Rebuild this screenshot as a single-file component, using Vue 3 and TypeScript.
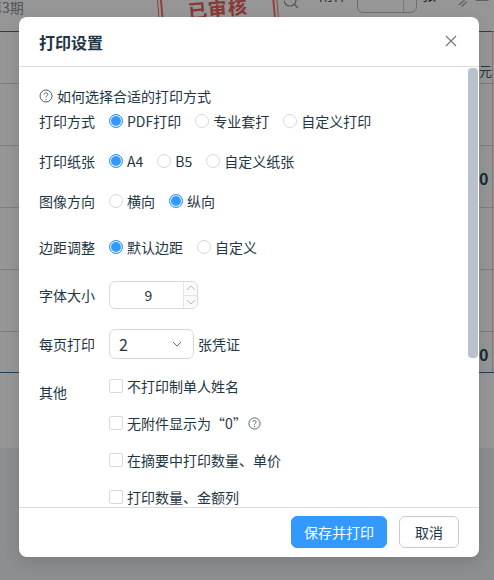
<script setup lang="ts">
const radioRows = [
  {
    title: '打印方式',
    cls: 'r-method',
    items: [
      { label: 'PDF打印', on: true },
      { label: '专业套打', on: false },
      { label: '自定义打印', on: false },
    ],
  },
  {
    title: '打印纸张',
    cls: 'r-paper',
    items: [
      { label: 'A4', on: true },
      { label: 'B5', on: false },
      { label: '自定义纸张', on: false },
    ],
  },
  {
    title: '图像方向',
    cls: 'r-dir',
    items: [
      { label: '横向', on: false },
      { label: '纵向', on: true },
    ],
  },
  {
    title: '边距调整',
    cls: 'r-margin',
    items: [
      { label: '默认边距', on: true },
      { label: '自定义', on: false },
    ],
  },
]
</script>

<template>
  <div class="page">
    <div class="backdrop-content">
      <div class="bg-lower"></div>
      <span class="bg-period">第3期</span>
      <div class="bg-stamp"><span>已审核</span></div>
      <svg class="bg-search" width="16" height="16" viewBox="0 0 16 16"><circle cx="6" cy="4" r="6" fill="none" stroke="#8a9199" stroke-width="1.2" /><path d="M10.5 8.5 14 12" stroke="#8a9199" stroke-width="1.2" /></svg>
      <span class="bg-text attach">附件</span>
      <div class="bg-spin"><i></i></div>
      <span class="bg-text zhang">张</span>
      <svg class="bg-clip" width="11" height="8" viewBox="0 0 11 8"><path d="M2 6 8 .5M4.5 7.5 10 2.5" fill="none" stroke="#a0a6ac" stroke-width="1.2" /></svg>
      <span class="bg-text shang">上</span>
      <span class="bg-line l1"></span>
      <span class="bg-line l2"></span>
      <span class="bg-line l3"></span>
      <span class="bg-line l4"></span>
      <span class="bg-line l5"></span>
      <span class="bg-line l6"></span>
      <span class="bg-line l7"></span>
      <span class="bg-vline"></span>
      <span class="bg-yuan">元</span>
      <span class="bg-zero z1">0</span>
      <span class="bg-zero z2">0</span>
    </div>
    <div class="mask"></div>

    <section class="dialog">
      <header class="dialog-head">
        <h2>打印设置</h2>
        <svg class="close" width="14" height="14" viewBox="0 0 14 14"><path d="M2 2 12 12M12 2 2 12" stroke="#6b7680" stroke-width="1.1" fill="none" /></svg>
      </header>

      <div class="dialog-body">
        <div class="scroll-thumb"></div>
        <div class="help-row">
          <svg class="help" width="14" height="14" viewBox="0 0 14 14"><circle cx="7" cy="7" r="6" fill="none" stroke="#4a5a66" stroke-width="1" /><path d="M5.2 5.4C5.3 4.3 6 3.8 7 3.8c1.1 0 1.8.7 1.8 1.6 0 1.3-1.8 1.4-1.8 2.8" fill="none" stroke="#4a5a66" stroke-width="1" /><circle cx="7" cy="10.1" r=".7" fill="#4a5a66" /></svg>
          <span>如何选择合适的打印方式</span>
        </div>

        <div v-for="row in radioRows" :key="row.title" class="form-row" :class="row.cls">
          <span class="label">{{ row.title }}</span>
          <div class="radios">
            <label v-for="item in row.items" :key="item.label" class="radio">
              <i class="dot" :class="{ on: item.on }"></i>
              <span>{{ item.label }}</span>
            </label>
          </div>
        </div>

        <div class="form-row r-font">
          <span class="label">字体大小</span>
          <div class="spinner">
            <span class="spin-value">9</span>
            <div class="spin-btns">
              <span><svg width="10" height="6" viewBox="0 0 10 6"><path d="M1 5 5 1l4 4" fill="none" stroke="#b5bcc4" /></svg></span>
              <span><svg width="10" height="6" viewBox="0 0 10 6"><path d="M1 1l4 4 4-4" fill="none" stroke="#b5bcc4" /></svg></span>
            </div>
          </div>
        </div>

        <div class="form-row r-per">
          <span class="label">每页打印</span>
          <div class="select">
            <span>2</span>
            <svg width="10" height="6" viewBox="0 0 10 6"><path d="M1 1l4 4 4-4" fill="none" stroke="#5d6b76" /></svg>
          </div>
          <span class="unit">张凭证</span>
        </div>

        <div class="others">
          <span class="label others-label">其他</span>
          <div class="checks">
            <label class="check"><i class="box"></i><span>不打印制单人姓名</span></label>
            <label class="check">
              <i class="box"></i><span>无附件显示为“0”</span>
              <svg class="help small" width="13" height="13" viewBox="0 0 14 14"><circle cx="7" cy="7" r="6" fill="none" stroke="#4a5a66" stroke-width="1" /><path d="M5.2 5.4C5.3 4.3 6 3.8 7 3.8c1.1 0 1.8.7 1.8 1.6 0 1.3-1.8 1.4-1.8 2.8" fill="none" stroke="#4a5a66" stroke-width="1" /><circle cx="7" cy="10.1" r=".7" fill="#4a5a66" /></svg>
            </label>
            <label class="check"><i class="box"></i><span>在摘要中打印数量、单价</span></label>
            <label class="check"><i class="box"></i><span>打印数量、金额列</span></label>
          </div>
        </div>
      </div>

      <footer class="dialog-foot">
        <button class="btn primary" type="button">保存并打印</button>
        <button class="btn" type="button">取消</button>
      </footer>
    </section>
  </div>
</template>

<style>
html, body { margin: 0; padding: 0; }
</style>

<style scoped>
.page {
  position: relative;
  width: 494px;
  height: 580px;
  overflow: hidden;
  background: #fff;
  font-family: "Noto Sans CJK SC", "Noto Sans", sans-serif;
  font-size: 14px;
  color: #1f3644;
}
.backdrop-content { position: absolute; inset: 0; }
.bg-lower { position: absolute; left: 0; right: 0; top: 448px; bottom: 0; background: #eff2f5; }
.mask { position: absolute; inset: 0; background: rgba(0, 0, 0, 0.41); }
.bg-period { position: absolute; left: -12px; top: -3px; font-size: 14px; color: #8a9199; white-space: nowrap; }
.bg-stamp {
  position: absolute; left: 160px; top: -34px; width: 114px; height: 64px; box-sizing: border-box;
  padding-bottom: 8px;
  border: 2px solid #f07068; outline: 1px solid #f07068; outline-offset: 2px;
  transform: rotate(-5deg); color: #e8605a; font-weight: 700; font-size: 19px;
  display: flex; justify-content: center; align-items: flex-end;
  letter-spacing: 1px; line-height: 24px;
}
.bg-search { position: absolute; left: 284px; top: -4px; }
.bg-text { position: absolute; top: -16px; font-size: 14px; color: #2a4256; white-space: nowrap; }
.attach { left: 319px; }
.zhang { left: 422px; }
.shang { left: 475px; color: #a0a6ac; }
.bg-clip { position: absolute; left: 457px; top: -1px; }
.bg-spin {
  position: absolute; left: 357px; top: -12px; width: 60px; height: 25px; box-sizing: border-box;
  border: 1px solid #bbb; border-radius: 6px;
}
.bg-spin i { position: absolute; right: 12px; top: 0; bottom: 0; width: 1px; background: #ccc; }
.bg-line { position: absolute; left: 0; right: 0; height: 1px; background: #d4d4d4; }
.l1 { top: 31px; background: #4a6882; }
.l2 { top: 83px; }
.l3 { top: 145px; }
.l4 { top: 207px; }
.l5 { top: 269px; }
.l6 { top: 331px; }
.l7 { top: 372px; background: #4a6882; }
.bg-vline { position: absolute; left: 492px; top: 31px; bottom: 208px; width: 1px; background: #e0cdcd; }
.bg-yuan { position: absolute; left: 479px; top: 61px; font-size: 13px; color: #4a5a66; }
.bg-zero { position: absolute; left: 479px; font-size: 16px; font-weight: 700; color: #2c4a60; }
.z1 { top: 166px; }
.z2 { top: 342px; }

.dialog {
  position: absolute;
  left: 19px;
  top: 17px;
  width: 460px;
  height: 540px;
  display: flex;
  flex-direction: column;
  background: #fff;
  border-radius: 8px;
  box-shadow: 0 6px 16px rgba(0, 0, 0, 0.12);
  overflow: hidden;
}
.dialog-head {
  flex: none;
  height: 50px;
  box-sizing: border-box;
  padding: 0 21px 0 20px;
  display: flex;
  align-items: center;
  justify-content: space-between;
  border-bottom: 1px solid #dcdcdc;
}
.dialog-head h2 { margin: 0; font-size: 16px; font-weight: 700; color: #1f3644; }
.close { display: block; margin-top: -2px; }
.dialog-body {
  position: relative;
  flex: 1;
  min-height: 0;
  overflow: hidden;
  padding: 19px 0 0 20px;
}
.scroll-thumb {
  position: absolute; right: 1px; top: 1px; width: 10px; height: 290px;
  border-radius: 4px; background: #b9c1cd;
}
.help-row { display: flex; align-items: center; gap: 4px; height: 20px; line-height: 20px; }
.help { flex: none; }
.form-row { display: flex; align-items: center; height: 24px; }
.label { flex: none; width: 70px; color: #1f3644; }
.radios { display: flex; align-items: center; gap: 14px; }
.radio { display: flex; align-items: center; gap: 4px; }
.dot {
  flex: none; display: block; width: 14px; height: 14px; box-sizing: border-box;
  border: 1px solid #d9d9d9; border-radius: 50%; background: #fff;
}
.dot.on { border-color: #3399ff; background: #3399ff; box-shadow: inset 0 0 0 1px #fff; }
.r-method { margin-top: 3px; }
.r-paper { margin-top: 16px; }
.r-dir { margin-top: 16px; }
.r-margin { margin-top: 22px; }
.r-font { margin-top: 22px; height: 28px; }
.r-per { margin-top: 20px; height: 30px; }
.spinner {
  position: relative; width: 89px; height: 28px; box-sizing: border-box;
  border: 1px solid #d9d9d9; border-radius: 6px; display: flex; align-items: center; overflow: hidden;
}
.spin-value { flex: 1; text-align: center; padding-left: 4px; }
.spin-btns {
  width: 13px; height: 26px; border-left: 1px solid #e4e4e4; display: flex; flex-direction: column;
  background: #fafafa;
}
.spin-btns span { flex: 1; display: flex; align-items: center; justify-content: center; }
.spin-btns span + span { border-top: 1px solid #e4e4e4; }
.select {
  width: 85px; height: 30px; box-sizing: border-box; padding: 0 11px 0 9px;
  border: 1px solid #d9d9d9; border-radius: 6px; display: flex; align-items: center;
  justify-content: space-between; font-size: 16px;
}
.unit { margin-left: 4px; }
.others { display: flex; margin-top: 17px; }
.others-label { margin-top: 6px; }
.checks { display: flex; flex-direction: column; gap: 17px; }
.check { display: flex; align-items: center; height: 20px; gap: 4px; white-space: nowrap; }
.box {
  flex: none; display: block; width: 14px; height: 14px; box-sizing: border-box;
  border: 1px solid #d9d9d9; border-radius: 2px; background: #fff;
}
.help.small { margin-left: -3px; }
.dialog-foot {
  flex: none; height: 50px; box-sizing: border-box;
  border-top: 1px solid #dcdcdc;
  padding: 8px 20px 0 0;
  display: flex; justify-content: flex-end; gap: 12px; align-items: flex-start;
}
.btn {
  height: 32px; padding: 0; width: 60px; box-sizing: border-box;
  border: 1px solid #ccc; border-radius: 6px; background: #fff; color: #1f3644;
  font: inherit; font-size: 14px;
}
.btn.primary { width: 96px; background: #3399ff; border-color: #3399ff; color: #fff; }
</style>
